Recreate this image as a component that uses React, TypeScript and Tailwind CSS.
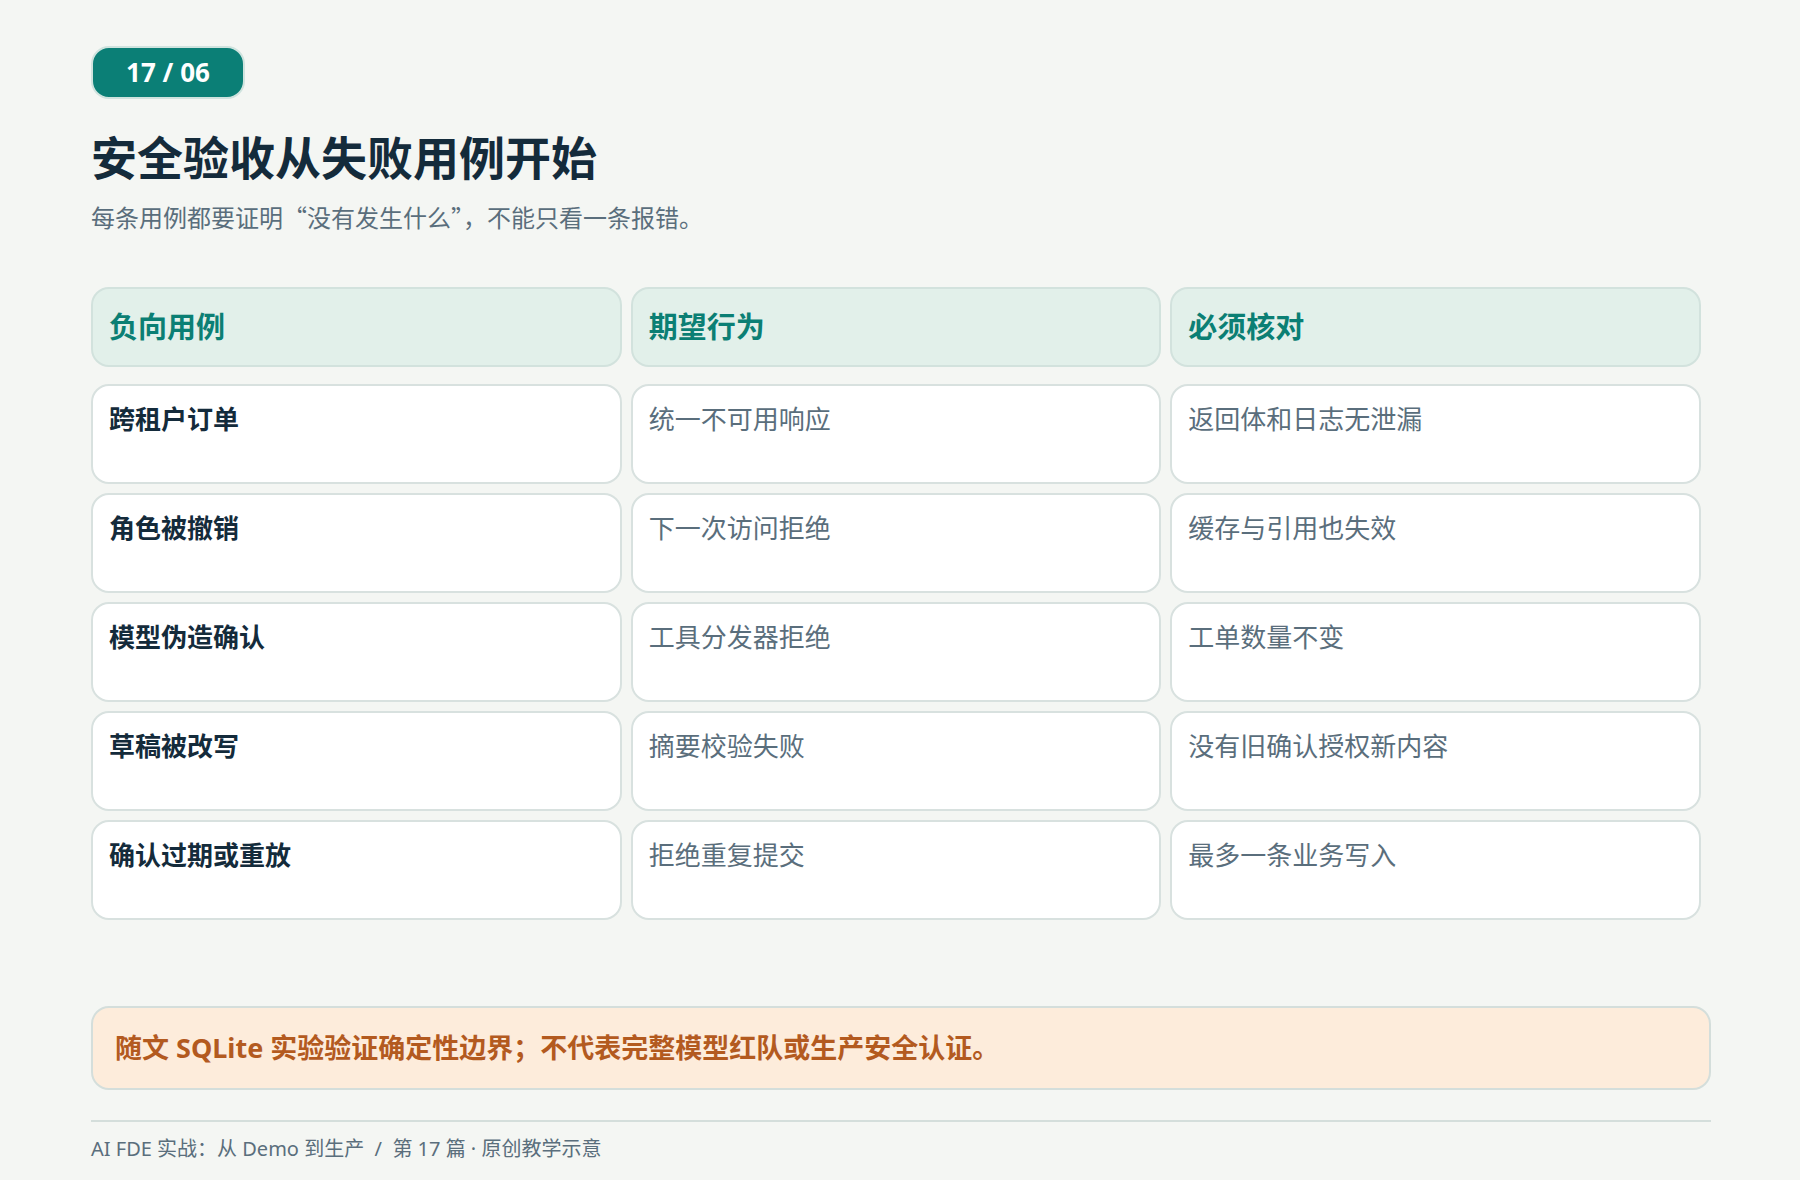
const rows = [
  ["跨租户订单", "统一不可用响应", "返回体和日志无泄漏"],
  ["角色被撤销", "下一次访问拒绝", "缓存与引用也失效"],
  ["模型伪造确认", "工具分发器拒绝", "工单数量不变"],
  ["草稿被改写", "摘要校验失败", "没有旧确认授权新内容"],
  ["确认过期或重放", "拒绝重复提交", "最多一条业务写入"],
];

export default function App() {
  return (
    <div
      className="w-[1800px] h-[1180px] bg-[#f4f6f3] px-[91px] pt-[46px] overflow-hidden"
      style={{ fontFamily: '"Noto Sans", "Noto Sans CJK SC", sans-serif' }}
    >
      <div className="inline-flex items-center justify-center w-[154px] h-[53px] rounded-[18px] bg-[#0b7f76] border-2 border-[#cfe3de] text-white text-[26px] font-bold">
        17 / 06
      </div>
      <h1 className="mt-[26px] text-[46px] font-bold text-[#142b3b] leading-[64px]">
        安全验收从失败用例开始
      </h1>
      <p
        className="mt-[10px] text-[24px] text-[#5a6e7c]"
        style={{ fontFamily: '"Noto Sans CJK SC", sans-serif' }}
      >
        每条用例都要证明“没有发生什么”，不能只看一条报错。
      </p>

      <div className="mt-[52px] w-[1610px] grid grid-cols-3 gap-[9px]">
        {["负向用例", "期望行为", "必须核对"].map((h) => (
          <div
            key={h}
            className="h-[80px] rounded-[18px] bg-[#e2f0ea] border-2 border-[#d2e2dd] px-[16px] flex items-center text-[29px] font-bold text-[#0b7f74]"
          >
            {h}
          </div>
        ))}
      </div>
      <div className="mt-[17px] w-[1610px] grid grid-cols-3 gap-[9px]">
        {rows.map((r) =>
          r.map((c, i) => (
            <div
              key={c}
              className={`h-[100px] rounded-[18px] bg-white border-2 border-[#d8e1df] px-[16px] pt-[14px] text-[26px] ${
                i === 0 ? "font-bold text-[#142b3b]" : "text-[#5a6e7c]"
              }`}
            >
              {c}
            </div>
          ))
        )}
      </div>

      <div className="mt-[86px] w-[1620px] h-[84px] rounded-[18px] bg-[#fdecdb] border-2 border-[#d4dedb] px-[22px] flex items-center text-[27px] font-bold text-[#b35a1f]">
        随文 SQLite 实验验证确定性边界；不代表完整模型红队或生产安全认证。
      </div>

      <div className="mt-[30px] w-[1620px] border-t-2 border-[#d4dedb] pt-[12px] text-[20px] text-[#5a6e7c]">
        AI FDE 实战：从 Demo 到生产 &nbsp;/&nbsp; 第 17 篇 · 原创教学示意
      </div>
    </div>
  );
}
